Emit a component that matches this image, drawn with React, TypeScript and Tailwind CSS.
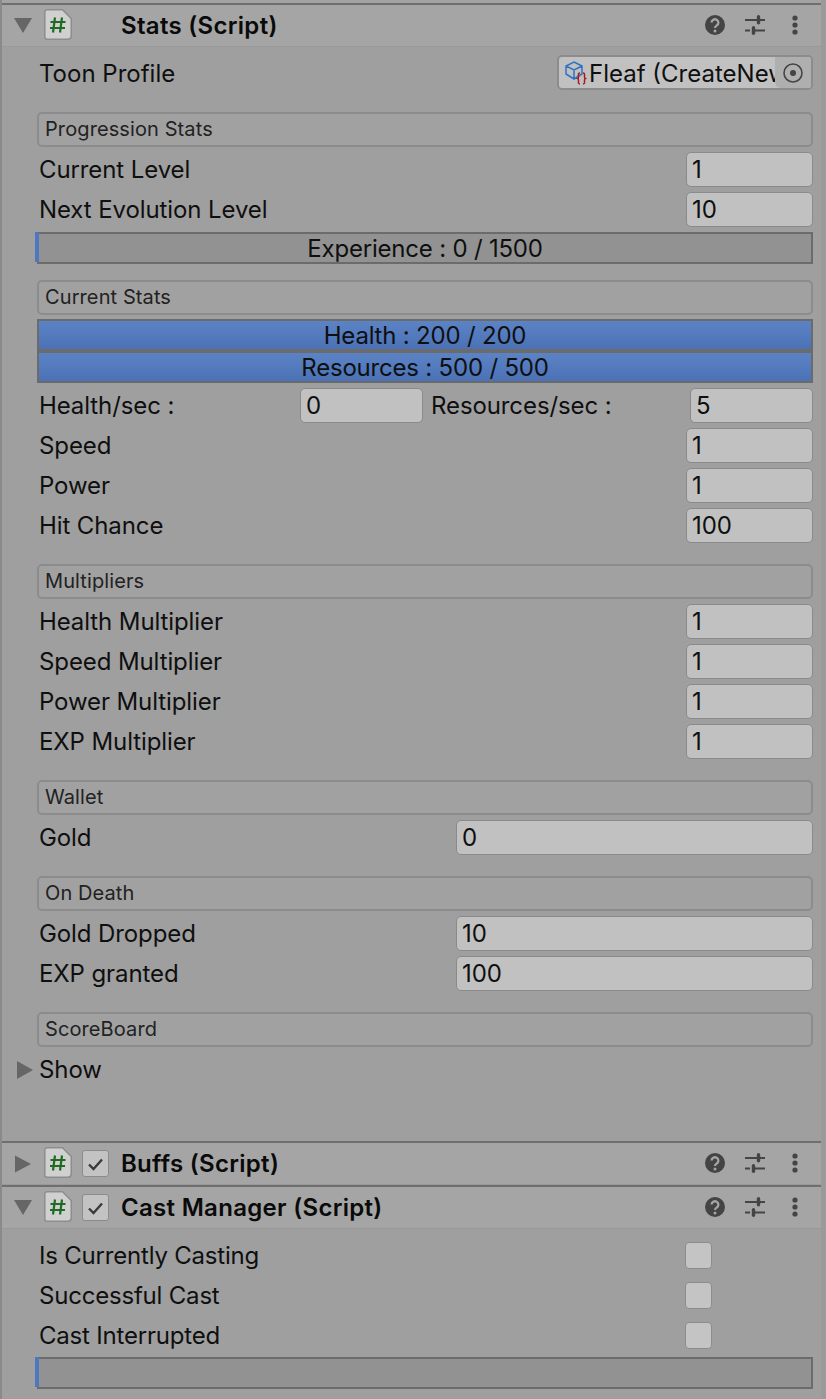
import React from 'react';

const FONT = "font-['Inter',sans-serif]";

const Arrow = ({ open, className = '' }: { open: boolean; className?: string }) => (
  <svg width="18" height="18" viewBox="0 0 18 18" className={className}>
    {open ? <path d="M0 1h18L9 16z" fill="#666" /> : <path d="M0 .5l16 8.5-16 8.5z" fill="#666" />}
  </svg>
);

const ScriptIcon = () => (
  <div className="w-[28px] h-[31px] mb-[2px] shrink-0">
    <svg width="28" height="31" viewBox="0 0 28 31">
      <path d="M3 .75h15.5l8.75 8.75V27a3.2 3.2 0 0 1-3.2 3.2H3A2.2 2.2 0 0 1 .8 28V3A2.2 2.2 0 0 1 3 .75z" fill="#d0d0d0" stroke="#8d8d8d" strokeWidth="1.5" />
      <path d="M11 8.5l-2 15M18 8.5l-2 15M6.5 13h15M6 19h15" stroke="#1f6b24" strokeWidth="2.2" fill="none" />
    </svg>
  </div>
);

const CheckBox = () => (
  <div className="w-[27px] h-[27px] shrink-0 rounded-[3px] border border-[#8c8c8c] bg-[#c3c3c3] flex items-center justify-center">
    <svg width="17" height="14" viewBox="0 0 17 14">
      <path d="M2 7.5l4.5 4.5L15 2.5" stroke="#3a3a3a" strokeWidth="2.4" fill="none" />
    </svg>
  </div>
);

const HeaderIcons = () => (
  <div className="ml-auto mb-[2px] flex items-center">
    <svg width="20" height="20" viewBox="0 0 20 20">
      <circle cx="10" cy="10" r="10" fill="#444" />
      <path d="M6.6 7.6a3.4 3.3 0 1 1 5.2 2.8c-1.2.8-1.8 1.2-1.8 2.6" stroke="#a5a5a5" strokeWidth="2.3" fill="none" />
      <circle cx="10" cy="15.9" r="1.5" fill="#a5a5a5" />
    </svg>
    <svg width="20" height="20" viewBox="0 0 20 20" className="ml-[20px]">
      <path d="M0 5h12M15 5h5M0 15.5h5M9 15.5h11" stroke="#444" strokeWidth="2" fill="none" />
      <rect x="11.8" y="0" width="3.4" height="9.5" rx="1.7" fill="#444" />
      <rect x="6.8" y="11" width="3.4" height="9" rx="1.7" fill="#444" />
    </svg>
    <svg width="8" height="20" viewBox="0 0 8 20" className="ml-[26px] mr-[22px]">
      <circle cx="4" cy="3" r="2.6" fill="#444" />
      <circle cx="4" cy="10" r="2.6" fill="#444" />
      <circle cx="4" cy="17" r="2.6" fill="#444" />
    </svg>
  </div>
);

const Header = ({ title, open, check }: { title: string; open: boolean; check?: boolean }) => (
  <div className="h-[42px] shrink-0 flex items-center bg-[#a5a5a5] border-b border-[#999999] pl-[12px]">
    <div className="w-[30px] shrink-0"><Arrow open={open} className={open ? '' : 'ml-[1px]'} /></div>
    <ScriptIcon />
    {check ? <div className="ml-[10px] w-[27px]"><CheckBox /></div> : <div className="ml-[10px] w-[27px]" />}
    <span className="ml-[12px] text-[24px] font-semibold tracking-[0.3px] text-[#0a0a0a] whitespace-nowrap">{title}</span>
    <HeaderIcons />
  </div>
);

const Section = ({ title, className = '' }: { title: string; className?: string }) => (
  <div className={`h-[35px] ml-[35px] mr-[8px] rounded-[5px] border-2 border-[#8c8c8c] bg-[#a1a1a1] flex items-center pl-[6px] pb-[2px] text-[20px] tracking-[0.1px] text-[#222] ${className}`}>
    {title}
  </div>
);

const Input = ({ value, className = '' }: { value: string; className?: string }) => (
  <div className={`h-[35px] rounded-[5px] border border-[#8a8a8a] bg-[#c1c1c1] flex items-center pl-[5px] pt-[1px] text-[24px] leading-none text-[#0f0f0f] ${className}`}>
    {value}
  </div>
);

const NumberRow = ({ label, value, wide }: { label: string; value: string; wide?: boolean }) => (
  <div className="h-[35px] ml-[37px] mr-[8px] mt-[5px] flex items-center text-[24px] tracking-[-0.1px] text-[#0f0f0f]">
    <span>{label}</span>
    <Input value={value} className={`ml-auto ${wide ? 'w-[357px]' : 'w-[127px]'}`} />
  </div>
);

const Bar = ({ text, fill }: { text: string; fill?: boolean }) => (
  <div className={`relative h-[32px] ml-[35px] mr-[8px] pt-[2px] border-2 border-[#6b6b6b] flex items-center justify-center text-[24px] tracking-[-0.2px] text-[#0f0f0f] ${fill ? 'bg-gradient-to-b from-[#5b83c4] to-[#4b72b6]' : 'bg-[#929292]'}`}>
    {!fill && <div className="absolute left-[-4px] top-[-2px] bottom-[0px] w-[4px] bg-[#4d78c0]" />}
    {text}
  </div>
);

const CheckRow = ({ label }: { label: string }) => (
  <div className="h-[27px] ml-[37px] mt-[13px] flex items-center text-[24px] tracking-[-0.2px] text-[#0f0f0f]">
    <span>{label}</span>
    <div className="ml-auto mr-[109px] w-[27px] h-[27px] rounded-[4px] border border-[#8c8c8c] bg-[#c4c4c4]" />
  </div>
);

export default function App() {
  return (
    <div className={`${FONT} w-[826px] h-[1399px] overflow-hidden bg-[#9f9f9f] border-l-2 border-[#8a8a8a] border-r-[5px] border-r-[#9a9a9a] flex flex-col`}>
      {/* top edge */}
      <div className="h-[3px] shrink-0 bg-[#a3a3a3]" />
      <div className="h-[2px] shrink-0 bg-[#6f6f6f]" />

      <Header title="Stats (Script)" open />

      <div className="h-[35px] mt-[8px] ml-[37px] mr-[8px] flex items-center text-[24px] text-[#0f0f0f]">
        <span className="pt-[2px]">Toon Profile</span>
        <div className="ml-auto w-[256px] h-[35px] rounded-[5px] border-2 border-[#8c8c8c] bg-[#c1c1c1] flex items-center overflow-hidden">
          <svg width="22" height="26" viewBox="0 0 22 26" className="ml-[6px] shrink-0">
            <path d="M9 2l8 4v8l-8 5-8-5V6zM1 6l8 4 8-4M9 10v9" stroke="#2f73c2" strokeWidth="1.5" fill="none" />
            <path d="M15 13c-2 0-1.5 1.5-1.5 3.5s0 1.5-1 2c1 .5 1 0 1 2s-.5 3.5 1.5 3.5M18 13c2 0 1.5 1.5 1.5 3.5s0 1.5 1 2c-1 .5-1 0-1 2s.5 3.5-1.5 3.5" stroke="#a81c1c" strokeWidth="1.5" fill="none" />
          </svg>
          <span className="ml-[2px] pt-[2px] whitespace-nowrap w-[186px] overflow-hidden">Fleaf (CreateNew</span>
          <div className="flex-1 h-full bg-[#afafaf] rounded-bl-[6px] flex items-center justify-center">
            <svg width="20" height="20" viewBox="0 0 20 20">
              <circle cx="10" cy="10" r="9" stroke="#444" strokeWidth="1.6" fill="none" />
              <circle cx="10" cy="10" r="3" fill="#444" />
            </svg>
          </div>
        </div>
      </div>

      <Section title="Progression Stats" className="mt-[22px]" />
      <NumberRow label="Current Level" value="1" />
      <NumberRow label="Next Evolution Level" value="10" />
      <div className="mt-[5px]"><Bar text="Experience : 0 / 1500" /></div>

      <Section title="Current Stats" className="mt-[16px]" />
      <div className="mt-[4px]"><Bar text="Health : 200 / 200" fill /></div>
      <Bar text="Resources : 500 / 500" fill />
      <div className="h-[35px] ml-[37px] mr-[8px] mt-[5px] flex items-center text-[24px] tracking-[-0.1px] text-[#0f0f0f]">
        <span className="w-[261px]">Health/sec :</span>
        <Input value="0" className="w-[123px]" />
        <span className="ml-[8px]">Resources/sec :</span>
        <Input value="5" className="ml-auto w-[123px]" />
      </div>
      <NumberRow label="Speed" value="1" />
      <NumberRow label="Power" value="1" />
      <NumberRow label="Hit Chance" value="100" />

      <Section title="Multipliers" className="mt-[21px]" />
      <NumberRow label="Health Multiplier" value="1" />
      <NumberRow label="Speed Multiplier" value="1" />
      <NumberRow label="Power Multiplier" value="1" />
      <NumberRow label="EXP Multiplier" value="1" />

      <Section title="Wallet" className="mt-[21px]" />
      <NumberRow label="Gold" value="0" wide />

      <Section title="On Death" className="mt-[21px]" />
      <NumberRow label="Gold Dropped" value="10" wide />
      <NumberRow label="EXP granted" value="100" wide />

      <Section title="ScoreBoard" className="mt-[21px]" />
      <div className="h-[35px] mt-[5px] flex items-center text-[24px] tracking-[-0.1px] text-[#0f0f0f]">
        <svg width="16" height="18" viewBox="0 0 16 18" className="ml-[15px]">
          <path d="M0 0l16 9-16 9z" fill="#666" />
        </svg>
        <span className="ml-[6px]">Show</span>
      </div>

      <div className="h-[2px] mt-[54px] shrink-0 bg-[#6f6f6f]" />
      <Header title="Buffs (Script)" open={false} check />
      <div className="h-[2px] shrink-0 bg-[#6f6f6f]" />
      <Header title="Cast Manager (Script)" open check />

      <CheckRow label="Is Currently Casting" />
      <CheckRow label="Successful Cast" />
      <CheckRow label="Cast Interrupted" />
      <div className="mt-[8px]"><Bar text="" /></div>
    </div>
  );
}
